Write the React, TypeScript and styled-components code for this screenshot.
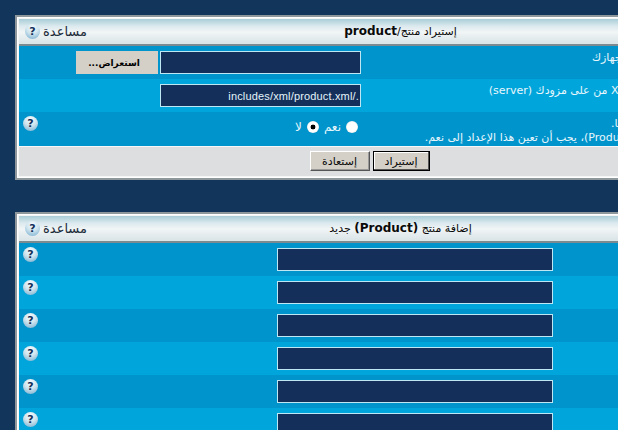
import React from "react";
import styled, { createGlobalStyle } from "styled-components";

const Global = createGlobalStyle`
  html, body { margin: 0; padding: 0; background: #12355b; }
  body { font-family: "DejaVu Sans", "Noto Sans", sans-serif; font-size: 11px; }
`;

const Page = styled.div`
  width: 618px;
  height: 430px;
  overflow: hidden;
  background: #12355b;
  padding: 15px 0 0 15px;
  box-sizing: border-box;
  display: flex;
  flex-direction: column;
  gap: 32px;
`;

const Panel = styled.form`
  direction: rtl;
  width: 772px;
  flex: none;
  box-sizing: border-box;
  background: #f4f6f6;
  border: 2px solid #8e979c;
  padding: 2px 3px 2px 2px;
  box-shadow: inset 0 0 0 1px #fff;
`;

const TitleBar = styled.div`
  height: 27px;
  box-sizing: border-box;
  display: grid;
  grid-template-columns: 1fr auto 1fr;
  align-items: center;
  background: linear-gradient(#a9cdd8 0, #dbe9ee 7px, #f1f5f6 13px, #dce6e9 23px, #dce6e9 25px);
  border-bottom: 2px solid #7c8b90;
  color: #0a0a0a;
`;

const TitleText = styled.div`
  grid-column: 2;
  font-weight: 400;
  font-size: 11px;
  line-height: 25px;
  white-space: nowrap;
  b { font-weight: 700; font-size: 12px; }
`;

const HelpLink = styled.div`
  grid-column: 3;
  justify-self: end;
  display: flex;
  align-items: center;
  gap: 3px;
  padding-left: 6px;
  font-size: 13px;
  color: #1c2b3a;
`;

const HelpIcon = styled.span`
  width: 15px;
  height: 15px;
  border-radius: 50%;
  flex: none;
  display: inline-block;
  text-align: center;
  font: 700 11px/15px "DejaVu Sans", sans-serif;
  color: #14315a;
  background: radial-gradient(circle at 50% 25%, #f6fbfd 0, #cfe4ee 45%, #6fa9cc 100%);
  direction: ltr;
`;

const Row = styled.div<{ $alt?: boolean; $label: number; $h?: number }>`
  display: grid;
  grid-template-columns: ${(p) => p.$label}px 1fr 22px;
  height: ${(p) => p.$h ?? 33}px;
  background: ${(p) => (p.$alt ? "#00a5db" : "#0094cc")};
  color: #e9f7fd;
  overflow: hidden;
`;

const Label = styled.div<{ $inset?: number }>`
  padding: 5px ${(p) => p.$inset ?? 0}px 0 0;
  font-size: 11px;
  line-height: 14px;
  white-space: nowrap;
`;

const Control = styled.div<{ $top?: number }>`
  display: flex;
  align-items: flex-start;
  gap: 2px;
  padding-top: ${(p) => p.$top ?? 5}px;
`;

const HelpCell = styled.div`
  padding: 4px 0 0 4px;
  display: flex;
  justify-content: flex-end;
`;

const Field = styled.input<{ $w: number }>`
  width: ${(p) => p.$w}px;
  height: 23px;
  box-sizing: border-box;
  background: #14305a;
  border: 1px solid #bfe6f3;
  color: #e4f3fa;
  padding: 0 1px;
  margin: 0;
  direction: rtl;
  font: 11px "Liberation Sans", sans-serif;
  letter-spacing: 0.16px;
  outline: none;
`;

const Browse = styled.button`
  width: 82px;
  height: 23px;
  box-sizing: border-box;
  border: 0;
  margin: 0;
  padding: 0 6px 0 0;
  background: #d4d0c8;
  color: #000;
  font: 700 9px "DejaVu Sans", sans-serif;
  direction: rtl;
`;

const Radios = styled.div`
  display: flex;
  align-items: center;
  gap: 5px;
  padding-right: 3px;
  font-size: 12px;
  line-height: 16px;
`;

const Radio = styled.input`
  appearance: none;
  width: 12px;
  height: 12px;
  margin: 0;
  border-radius: 50%;
  background: radial-gradient(circle, #fff 0, #fff 55%, #b9c2c6 100%);
  border: 0;
  &:checked {
    background: radial-gradient(circle, #000 0, #000 25%, #fff 32%, #fff 60%, #9aa6ab 100%);
  }
`;

const Footer = styled.div`
  height: 30px;
  box-sizing: border-box;
  background: #dcdee0;
  border-top: 1px solid #f6f7f7;
  display: flex;
  justify-content: center;
  align-items: flex-start;
  gap: 3px;
  padding: 4px 62px 0 0;
`;

const Btn = styled.button<{ $primary?: boolean }>`
  width: ${(p) => (p.$primary ? 57 : 60)}px;
  height: 20px;
  box-sizing: border-box;
  margin: 0;
  padding: 0;
  background: #d4d0c8;
  color: #0a0a0a;
  font: 11px "DejaVu Sans", sans-serif;
  direction: rtl;
  border: 1px solid;
  border-color: ${(p) => (p.$primary ? "#000" : "#fff #555 #555 #fff")};
  box-shadow: ${(p) => (p.$primary ? "inset -1px -1px 0 #555, inset 1px 1px 0 #fff" : "inset -1px -1px 0 #999")};
`;

const Spacer = styled.div`
  grid-column: 1;
`;

const NEW_ROWS = [0, 1, 2, 3, 4, 5];

export default function App() {
  return (
    <>
      <Global />
      <Page>
        <Panel onSubmit={(e) => e.preventDefault()}>
          <TitleBar>
            <TitleText>
              إستيراد منتج/<b>product</b>
            </TitleText>
            <HelpLink>
              <span>مساعدة</span>
              <HelpIcon>?</HelpIcon>
            </HelpLink>
          </TitleBar>
          <Row $label={421}>
            <Label $inset={8}>ارفع ملف المنتج بصيغة XML من جهازك</Label>
            <Control>
              <Field $w={201} type="text" />
              <Browse type="button">استعراض...</Browse>
            </Control>
            <HelpCell />
          </Row>
          <Row $alt $label={421}>
            <Label $inset={2}>أو قم باستيراد ملف منتج بصيغة XML من على مزودك (server)</Label>
            <Control>
              <Field $w={201} type="text" defaultValue="./includes/xml/product.xml" />
            </Control>
            <HelpCell />
          </Row>
          <Row $label={421} $h={34}>
            <Label $inset={5}>
              السماح بالكتابة فوق منتج موجود هنا.
              <br />
              إذا كنت تكتب فوق منتج موجود (Product)، يجب أن تعين هذا الإعداد إلى نعم.
            </Label>
            <Control $top={7}>
              <Radios>
                <Radio type="radio" name="overwrite" />
                <span>نعم</span>
                <Radio type="radio" name="overwrite" defaultChecked />
                <span>لا</span>
              </Radios>
            </Control>
            <HelpCell>
              <HelpIcon>?</HelpIcon>
            </HelpCell>
          </Row>
          <Footer>
            <Btn $primary type="submit">إستيراد</Btn>
            <Btn type="reset">إستعادة</Btn>
          </Footer>
        </Panel>
        <Panel onSubmit={(e) => e.preventDefault()}>
          <TitleBar>
            <TitleText>
              إضافة منتج <b>(Product)</b> جديد
            </TitleText>
            <HelpLink>
              <span>مساعدة</span>
              <HelpIcon>?</HelpIcon>
            </HelpLink>
          </TitleBar>
          {NEW_ROWS.map((i) => (
            <Row key={i} $alt={i % 2 === 1} $label={229}>
              <Spacer />
              <Control>
                <Field $w={276} type="text" />
              </Control>
              <HelpCell>
                <HelpIcon>?</HelpIcon>
              </HelpCell>
            </Row>
          ))}
        </Panel>
      </Page>
    </>
  );
}
